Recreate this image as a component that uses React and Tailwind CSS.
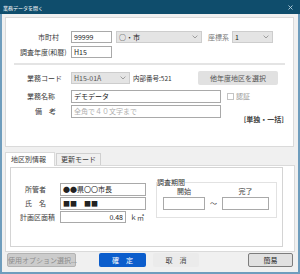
function Chev() {
  return (
    <svg width="6" height="4" viewBox="0 0 6 4">
      <path d="M0.6 0.6 L3 3 L5.4 0.6" fill="none" stroke="#8a8a8a" strokeWidth="0.8" />
    </svg>
  );
}

function Select({ w, value, muted }) {
  return (
    <div className={`${w} h-[12px] flex items-center justify-between bg-[#e4e4e4] border border-[#cdcdcd] pl-[2px] pr-[3px] leading-none ${muted ? "text-[#555]" : "text-[#222]"}`}>
      <span>{value}</span>
      <Chev />
    </div>
  );
}

function Field({ w, h = "h-[12px]", children, right, placeholder }) {
  return (
    <div className={`${w} ${h} flex items-center ${right ? "justify-end" : ""} bg-white border border-[#a9a9a9] px-[2px] leading-none ${placeholder ? "text-[#b0b0b0]" : "text-[#222]"}`}>
      {children}
    </div>
  );
}

export default function App() {
  return (
    <div className="w-[300px] h-[274px] flex flex-col bg-[#f0f0f0] border-x-2 border-b-2 border-[#6f9dbd] font-['Noto_Sans_CJK_JP',sans-serif] text-[7px] text-[#3a3a3a]">
      {/* title bar */}
      <div className="h-[14px] shrink-0 -mx-[2px] bg-[#0f4d6c] flex items-center justify-between pl-[3px] pr-[7px]">
        <span className="text-[5px] text-white leading-none">業務データを開く</span>
        <svg width="5" height="5" viewBox="0 0 5 5">
          <path d="M0.5 0.5 L4.5 4.5 M4.5 0.5 L0.5 4.5" stroke="#b5d0de" strokeWidth="0.9" />
        </svg>
      </div>

      {/* top panel */}
      <div className="mt-[3px] ml-[3px] w-[289px] h-[130px] shrink-0 bg-white border border-[#dadada] pt-[13px]">
        <div className="flex items-center h-[12px]">
          <div className="w-[65px] pl-[32px] leading-none">市町村</div>
          <Field w="w-[41px]">99999</Field>
          <div className="ml-[4px]">
            <Select w="w-[86px]" value="○・市" />
          </div>
          <div className="ml-[6px] w-[24px] text-[#777] leading-none">座標系</div>
          <Select w="w-[41px]" value="1" />
        </div>
        <div className="flex items-center h-[12px] mt-[3px]">
          <div className="w-[65px] pl-[14px] leading-none whitespace-nowrap">調査年度(和暦)</div>
          <Field w="w-[41px]">H15</Field>
        </div>
        <div className="mt-[5px] mx-[8px] h-[2px] bg-[#e4e4e4]" />
        <div className="flex items-center h-[14px] mt-[6px]">
          <div className="w-[65px] pl-[21px] leading-none">業務コード</div>
          <Select w="w-[59px]" value="H15-01A" muted />
          <span className="ml-[3px] leading-none text-[6.5px] text-[#333]">内部番号:521</span>
          <button className="ml-auto mr-[15px] w-[80px] h-[14px] bg-[#e1e1e1] rounded-[2px] text-[#555] leading-none">他年度地区を選択</button>
        </div>
        <div className="flex items-center h-[13px] mt-[5px]">
          <div className="w-[65px] pl-[21px] leading-none">業務名称</div>
          <Field w="w-[150px]" h="h-[13px]">デモデータ</Field>
          <div className="ml-[6px] w-[7px] h-[7px] border border-[#c4c4c4] bg-white" />
          <span className="ml-[2px] text-[#999] leading-none">認証</span>
        </div>
        <div className="flex items-start mt-[2px]">
          <div className="w-[65px] h-[13px] flex items-center pl-[29px] leading-none">備　考</div>
          <Field w="w-[150px]" h="h-[13px]" placeholder>全角で４０文字まで</Field>
          <span className="ml-auto mr-[9px] mt-[11px] leading-none font-bold text-[#444]">[単独・一括]</span>
        </div>
      </div>

      {/* tabs */}
      <div className="mt-[4px] ml-[3px] h-[14px] shrink-0 flex items-end relative z-10">
        <div className="w-[50px] h-[14px] bg-white border-x border-t border-[#dadada] -mb-px pb-px flex items-center pl-[5px] leading-none">地区別情報</div>
        <div className="ml-px w-[45px] h-[12px] bg-[#f0f0f0] border-x border-t border-[#d0d0d0] flex items-center pl-[4px] leading-none">更新モード</div>
      </div>
      <div className="ml-[3px] w-[290px] h-[87px] shrink-0 bg-white border border-[#dadada]">
        <div className="mt-px ml-[4px] w-[273px] h-[80px] border border-[#d4d4d4] pt-[10px] flex items-start">
          <div className="mt-[5px] flex flex-col gap-[1px]">
            <div className="flex items-center h-[13px]">
              <div className="w-[49px] pl-[14px] leading-none">所管者</div>
              <Field w="w-[86px]" h="h-[13px]">●●県〇〇市長</Field>
            </div>
            <div className="flex items-center h-[13px]">
              <div className="w-[49px] pl-[14px] leading-none">氏　名</div>
              <Field w="w-[86px]" h="h-[13px]">■■　■■</Field>
            </div>
            <div className="flex items-center h-[12px]">
              <div className="w-[49px] pl-[9px] leading-none">計画区面積</div>
              <Field w="w-[66px]" right>0.48</Field>
              <span className="ml-[4px] leading-none">ｋ㎡</span>
            </div>
          </div>
          <fieldset className="ml-[10px] w-[121px] border border-[#e2e2e2] pb-[7px]">
            <legend className="leading-[8px] text-[#333]">調査期間</legend>
            <div className="flex items-end">
              <div className="ml-[6px] w-[42px] flex flex-col items-center">
                <span className="leading-none mt-[2px] mb-[2px]">開始</span>
                <div className="w-full h-[13px] bg-white border border-[#a9a9a9]" />
              </div>
              <div className="w-[17px] h-[13px] flex items-center justify-center leading-none">～</div>
              <div className="w-[47px] flex flex-col items-center">
                <span className="leading-none mt-[2px] mb-[2px]">完了</span>
                <div className="w-full h-[13px] bg-white border border-[#a9a9a9]" />
              </div>
            </div>
          </fieldset>
        </div>
      </div>

      {/* buttons */}
      <div className="mt-px h-[14px] shrink-0 flex items-center">
        <button className="ml-[5px] w-[69px] h-[14px] bg-[#cccccc] border border-[#b3b3b3] rounded-[2px] text-[#8c8c8c] leading-none whitespace-nowrap">使用オプション選択...</button>
        <button className="ml-[23px] w-[47px] h-[14px] bg-[#0b5dcc] rounded-[2px] text-white leading-none">確　定</button>
        <button className="ml-[7px] w-[46px] h-[14px] bg-[#ebebeb] rounded-[2px] text-[#444] leading-none">取　消</button>
        <button className="ml-[49px] w-[45px] h-[14px] bg-[#e1e1e1] border border-[#7d7d7d] rounded-[2px] text-[#222] leading-none">簡易</button>
      </div>
    </div>
  );
}
